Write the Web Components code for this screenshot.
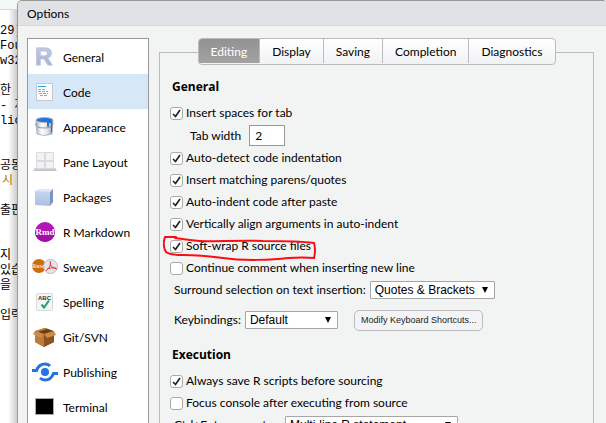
<!DOCTYPE html>
<html lang="en">
<head>
<meta charset="utf-8">
<title>Options</title>
<style>
  html, body { height: 100%; }
  body { margin: 0; overflow: hidden; background: #fff; color: #000; font: 12px/16px Lato, "Open Sans", "Noto Sans CJK KR", sans-serif; }
  svg { overflow: visible; }
</style>
</head>
<body>
<options-page>
  <console-output slot="console"></console-output>
  <options-dialog heading="Options">
    <category-list slot="nav">
      <category-item label="General"><svg width="28" height="24" viewBox="0 0 28 24"><defs><linearGradient id="r" x2="0" y2="1"><stop stop-color="#cdd5e8"/><stop offset="1" stop-color="#9aa9cf"/></linearGradient></defs><text x="4" y="20" font-family="Liberation Sans, sans-serif" font-weight="700" font-size="24" fill="url(#r)" stroke="#b3bfdc" stroke-width="1">R</text></svg></category-item>
      <category-item label="Code" selected><svg width="28" height="24" viewBox="0 0 28 24"><rect x="5.500" y="3.500" width="16" height="17" fill="#fafbfc" stroke="#c5cbd1"/><path d="M7 6.500h8" stroke="#2b9ad6"/><path d="M7 9.500h7M7 11.500h10M8 13.500h9M9 15.500h7" stroke="#a2a7ad" stroke-dasharray="3 1"/></svg></category-item>
      <category-item label="Appearance"><svg width="28" height="24" viewBox="0 0 28 24"><defs><linearGradient id="b"><stop stop-color="#aeb6bf"/><stop offset=".35" stop-color="#fff"/><stop offset=".7" stop-color="#d9dfe5"/><stop offset="1" stop-color="#8d99a6"/></linearGradient></defs><path d="M5 5l1 14q7 3 15 0L22 5z" fill="url(#b)" stroke="#98a2ad" stroke-width=".7"/><ellipse cx="13.500" cy="5" rx="8.500" ry="2.500" fill="#2074dc" stroke="#aeb8c3"/><path d="M16 6v5q1 2 2 0V8h2v9q1 2 1-1V5z" fill="#2074dc"/><path d="M5 8q-2 5 9 5 7 0 8-5" fill="none" stroke="#77818c" stroke-width=".8"/></svg></category-item>
      <category-item label="Pane Layout"><svg width="28" height="24" viewBox="0 0 28 24"><path d="M4 18h20l2 3H2z" fill="#c6c8cd"/><rect x="5" y="2" width="18" height="17" rx="1" fill="#d9dbdf"/><path d="M6 3h7v7H6zM15 3h7v7h-7zM6 12h7v6H6zM15 12h7v6h-7z" fill="#f1f2f4"/></svg></category-item>
      <category-item label="Packages"><svg width="28" height="24" viewBox="0 0 28 24"><defs><linearGradient id="p" x2="0" y2="1"><stop stop-color="#c5d6ee"/><stop offset="1" stop-color="#a9c0e3"/></linearGradient></defs><path d="M4 6l4-2h14l-3 3H4z" fill="#dce7f6"/><path d="M4 6l15 1v14l-15-1z" fill="url(#p)"/><path d="M19 7l3-3v13l-3 4z" fill="#7795c9"/></svg></category-item>
      <category-item label="R Markdown"><svg width="28" height="24" viewBox="0 0 28 24"><circle cx="14" cy="12" r="10" fill="#b315b9"/><path d="M4 12a10 10 0 0 0 20 0z" fill="#a20da8"/><text x="14" y="15" text-anchor="middle" font-family="Liberation Serif, serif" font-weight="700" font-size="9" fill="#fff">Rmd</text></svg></category-item>
      <category-item label="Sweave"><svg width="28" height="24" viewBox="0 0 28 24"><circle cx="8" cy="11" r="7" fill="#d06c0a"/><text x="7" y="13" text-anchor="middle" font-family="Liberation Serif, serif" font-weight="700" font-size="6" fill="#ffe6c8">Rnw</text><circle cx="19.500" cy="11.500" r="7" fill="#e5e6ea" stroke="#b9bcc4"/><path d="M19 6q2 5-4 10M19 8q1 5 7 6M16 14q5-2 9-1" fill="none" stroke="#e0383e"/></svg></category-item>
      <category-item label="Spelling"><svg width="28" height="24" viewBox="0 0 28 24"><rect x="5.500" y="3.500" width="16" height="17" rx="1" fill="#f5f6f8" stroke="#d5d9df"/><text x="13.500" y="10" text-anchor="middle" font-family="Liberation Sans, sans-serif" font-weight="700" font-size="6" fill="#333">ABC</text><path d="M10.500 14.500l2.500 3 5-7" fill="none" stroke="#20a06a" stroke-width="2"/></svg></category-item>
      <category-item label="Git/SVN"><svg width="28" height="24" viewBox="0 0 28 24"><path d="M4 6l10-3 9 3v11l-10 5-9-5z" fill="#a5672c"/><path d="M4 7l9 3v12l-9-5z" fill="#bb7b3a"/><path d="M13 10l10-3v10l-10 5z" fill="#8c5220"/><path d="M5 6l9-3 8 3-9 3z" fill="#6e3f17"/><path d="M4 6l9 3-3 4-8-4zM13 9l10-3 2 4-9 3z" fill="#c98c4a"/><path d="M4 6l10-3 2 1-10 3z" fill="#c98b48"/></svg></category-item>
      <category-item label="Publishing"><svg width="28" height="24" viewBox="0 0 28 24"><circle cx="14" cy="12" r="4" fill="#2672e0"/><path d="M1 10.500h4.500Q8 4 14 4q3 0 5 2M27 13.500h-4.500Q20 20 14 20q-3 0-5-2" fill="none" stroke="#2672e0" stroke-width="3"/></svg></category-item>
      <category-item label="Terminal"><svg width="28" height="24" viewBox="0 0 28 24"><rect x="4.500" y="3.500" width="18" height="16" fill="#000" stroke="#aaa"/></svg></category-item>
    </category-list>

    <tab-panel slot="content" tabs="Editing,Display,Saving,Completion,Diagnostics">
      <pref-group heading="General">
        <pref-check checked>Insert spaces for tab</pref-check>
        <pref-number label="Tab width" value="2"></pref-number>
        <pref-check checked>Auto-detect code indentation</pref-check>
        <pref-check checked>Insert matching parens/quotes</pref-check>
        <pref-check checked>Auto-indent code after paste</pref-check>
        <pref-check checked>Vertically align arguments in auto-indent</pref-check>
        <pref-check checked circled>Soft-wrap R source files</pref-check>
        <pref-check>Continue comment when inserting new line</pref-check>
        <pref-select label="Surround selection on text insertion:" value="Quotes &amp; Brackets" style="--w:125px"></pref-select>
        <pref-select label="Keybindings:" value="Default" style="--w:93px;--h:38px"><push-button>Modify Keyboard Shortcuts...</push-button></pref-select>
      </pref-group>
      <pref-group heading="Execution">
        <pref-check checked>Always save R scripts before sourcing</pref-check>
        <pref-check>Focus console after executing from source</pref-check>
        <pref-select label="Ctrl+Enter executes:" value="Multi-line R statement" style="--w:173px"></pref-select>
      </pref-group>
    </tab-panel>
  </options-dialog>
</options-page>

<script>
const define = (name, render) => customElements.define(name, class extends HTMLElement {
  connectedCallback() {
    if (this.shadowRoot) return;
    this.attachShadow({ mode: 'open' }).innerHTML = render(this);
  }
});
const esc = s => (s || '').replace(/&/g, '&amp;').replace(/</g, '&lt;');

define('options-page', () => `
  <style>
    :host { display: grid; grid-template-columns: 17px minmax(0, 1fr); height: 100vh; overflow: hidden; }
  </style>
  <slot name="console"></slot><slot></slot>`);

define('console-output', () => {
  const lines = ['29)', 'Fou', 'w32', '', '한', '- 자', 'lic', '', '', '공동', '<b>시</b>', '', '출판', '', '', '지', '있습', '을', '', '입력'];
  return `
  <style>
    :host { display: block; overflow: hidden; background: linear-gradient(90deg, #0000 8px, #0003 17px); }
    header { height: 9px; background: #f2f7f8; border-bottom: 1px solid #d3d8dc; }
    pre { margin: 0; padding-top: 14px; font: 12px/15px "Liberation Mono", "Noto Sans CJK KR", monospace; }
    span { display: block; height: 15px; }
    b { font-weight: 400; color: #b07400; padding-left: 2px; }
  </style>
  <header></header><pre>${lines.map(l => `<span>${l}</span>`).join('')}</pre>`;
});

define('options-dialog', el => `
  <style>
    :host { display: flex; flex-direction: column; min-width: 0; border: 1px solid #999; border-right: 0; border-bottom: 0; border-radius: 5px 3px 0 0; background: #f2f4f4; overflow: hidden; }
    h1 { margin: 0; padding: 5px 9px 3px; font: inherit; background: #e1e2e6; border-bottom: 1px solid #d5d8df; }
    main { display: grid; grid-template-columns: 122px minmax(0, 1fr); gap: 10px; padding: 12px 12px 0 9px; }
  </style>
  <h1>${esc(el.getAttribute('heading'))}</h1>
  <main><slot name="nav"></slot><slot name="content"></slot></main>`);

define('category-list', () => `
  <style>:host { display: block; box-sizing: border-box; background: #fff; border: 1px solid #999; }</style>
  <nav><slot></slot></nav>`);

define('category-item', el => `
  <style>
    :host { display: block; }
    :host([selected]) { background: #d6e8f8; }
    button { display: flex; align-items: center; gap: 4px; width: 100%; height: 35px; padding: 0 3px; border: 0; background: none; font: inherit; color: inherit; white-space: nowrap; }
    slot { display: block; flex: none; width: 28px; height: 24px; }
    span { padding-top: 2px; }
  </style>
  <button type="button"><slot></slot><span>${el.getAttribute('label')}</span></button>`);

define('tab-panel', el => `
  <style>
    :host { display: block; }
    .tabs { display: flex; justify-content: center; }
    .bar { display: flex; border: 1px solid #bbb; border-radius: 4px; overflow: hidden; background: linear-gradient(#fff, #f1f2f4); }
    .rule { flex: 1; height: 12px; border: 1px solid #bbb; border-width: 1px 0 0 1px; margin-top: 14px; }
    .rule:last-child { border-width: 1px 1px 0 0; }
    button { height: 24px; padding: 2px 12px 0; border: 0; border-right: 1px solid #bbb; background: none; font: inherit; color: inherit; }
    button:last-child { border: 0; }
    button[aria-selected=true] { color: #fff; background: linear-gradient(#929292, #a2a2a2); }
    .body { border: 1px solid #bbb; border-width: 0 1px; padding: 14px 10px; }
  </style>
  <div class="tabs"><i class="rule"></i><div class="bar" role="tablist">${el.getAttribute('tabs').split(',').map((t, i) => `<button type="button" role="tab" aria-selected="${!i}">${t}</button>`).join('')}</div><i class="rule"></i></div>
  <div class="body"><slot></slot></div>`);

define('pref-group', el => `
  <style>
    :host { display: block; padding-bottom: 8px; }
    h2 { margin: 0 0 7px 2px; font: 700 12px/16px "Open Sans", sans-serif; }
  </style>
  <h2>${el.getAttribute('heading')}</h2><slot></slot>`);

define('pref-check', el => `
  <style>
    :host { display: block; position: relative; }
    label { display: flex; align-items: center; gap: 3px; height: 22px; white-space: nowrap; }
    input { appearance: none; flex: none; box-sizing: border-box; width: 13px; height: 13px; margin: 0; border: 1px solid #aaa; border-radius: 3px; background: #fff; }
    input:checked { background: #fff url("data:image/svg+xml,%3Csvg xmlns='http://www.w3.org/2000/svg' viewBox='0 0 11 11'%3E%3Cpath d='M2 6l2.500 2.500L9 2' fill='none' stroke='%23222' stroke-width='1.700'/%3E%3C/svg%3E"); }
    svg { position: absolute; left: -7px; top: 0; pointer-events: none; }
  </style>
  <label><input type="checkbox" ${el.hasAttribute('checked') ? 'checked' : ''}><span><slot></slot></span></label>
  ${el.hasAttribute('circled') ? '<svg width="156" height="28" viewBox="0 0 156 28"><path d="M13 2H2Q-1 10 3 17Q7 20 20 20C35 20 45 21 60 23C80 26 110 25 125 23Q140 22 151 23Q153 15 151 8Q135 6 100 6C65 5 45 8 27 5L12 3" fill="none" stroke="#fb0d14" stroke-width="2" stroke-linecap="round"/></svg>' : ''}`);

define('pref-number', el => `
  <style>
    :host { display: block; padding-left: 20px; }
    label { display: flex; align-items: center; gap: 8px; height: 23px; }
    input { box-sizing: border-box; width: 36px; height: 21px; padding: 0 5px; border: 1px solid #999; background: #fff; font: inherit; }
  </style>
  <label>${el.getAttribute('label')}<input type="text" value="${el.getAttribute('value')}"></label>`);

define('pref-select', el => `
  <style>
    :host { display: flex; align-items: center; height: var(--h, 22px); padding-left: 4px; }
    label { display: flex; align-items: center; gap: 4px; white-space: nowrap; }
    .box { position: relative; display: block; width: var(--w); }
    select { appearance: none; display: block; box-sizing: border-box; width: 100%; height: 18px; padding: 0 4px; border: 1px solid #a6a6a6; border-radius: 1px; background: #fff; color: #000; font: 12px "Liberation Sans", sans-serif; }
    .box::after { content: ""; position: absolute; right: 7px; top: 6px; border: 3px solid transparent; border-top: 6px solid #000; border-bottom: 0; pointer-events: none; }
    slot { display: block; margin-left: 16px; }
  </style>
  <label>${el.getAttribute('label')}<span class="box"><select><option>${esc(el.getAttribute('value'))}</option></select></span></label><slot></slot>`);

define('push-button', () => `
  <style>
    :host { display: block; }
    button { height: 21px; padding: 0 6px; border: 1px solid #bbb; border-radius: 5px; background: #f4f4f7; color: #222; font: 9px "Liberation Sans", sans-serif; white-space: nowrap; }
  </style>
  <button type="button"><slot></slot></button>`);
</script>
</body>
</html>
